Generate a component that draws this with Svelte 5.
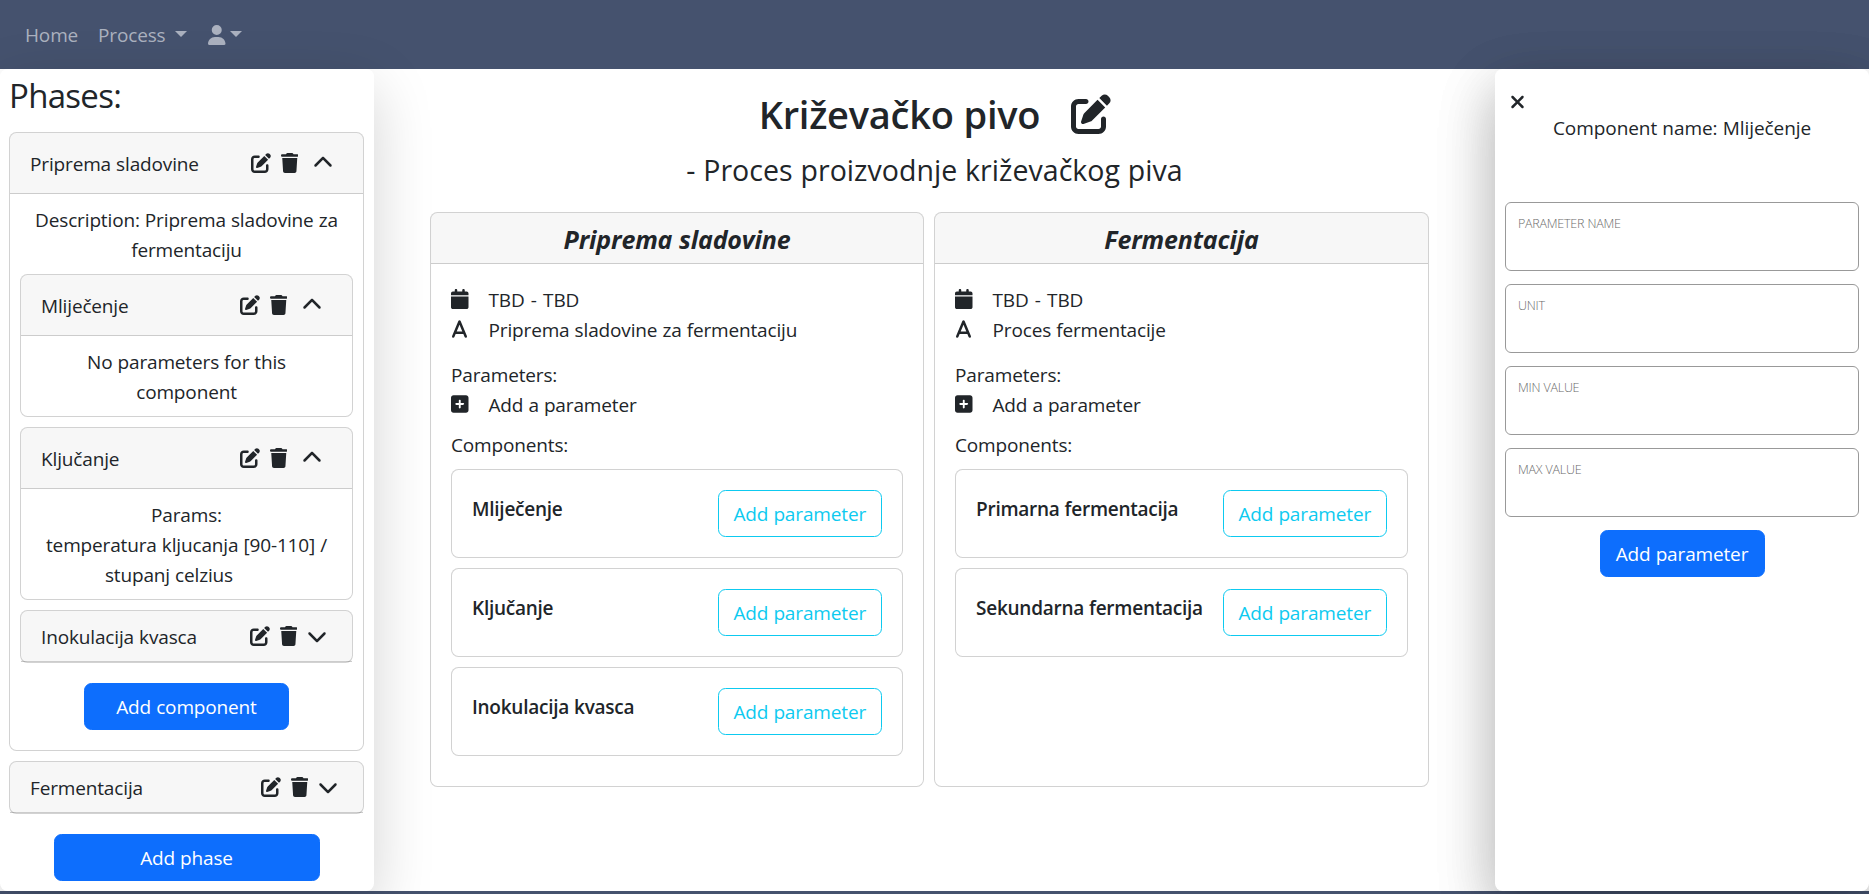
<script>
  const icons = {
    edit: [512, 'M471.6 21.7c-21.9-21.9-57.3-21.9-79.2 0L362.3 51.7l97.9 97.9 30.1-30.1c21.9-21.9 21.9-57.3 0-79.2L471.6 21.7zm-299.2 220c-6.1 6.1-10.8 13.6-13.5 21.9l-29.6 88.8c-2.9 8.6-.6 18.1 5.8 24.6s15.9 8.7 24.6 5.8l88.8-29.6c8.2-2.7 15.7-7.4 21.9-13.5L437.7 172.3 339.7 74.3 172.4 241.7zM96 64C43 64 0 107 0 160V416c0 53 43 96 96 96H352c53 0 96-43 96-96V320c0-17.7-14.3-32-32-32s-32 14.3-32 32v96c0 17.7-14.3 32-32 32H96c-17.7 0-32-14.3-32-32V160c0-17.7 14.3-32 32-32h96c17.7 0 32-14.3 32-32s-14.3-32-32-32H96z'],
    trash: [448, 'M135.2 17.7L128 32H32C14.3 32 0 46.3 0 64S14.3 96 32 96H416c17.7 0 32-14.3 32-32s-14.3-32-32-32H320l-7.2-14.3C307.4 6.8 296.3 0 284.2 0H163.8c-12.1 0-23.2 6.8-28.6 17.7zM416 128H32L53.2 467c1.6 25.3 22.6 45 47.9 45H346.9c25.3 0 46.3-19.7 47.9-45L416 128z'],
    up: [512, 'M233.4 105.4c12.5-12.5 32.8-12.5 45.3 0l192 192c12.5 12.5 12.5 32.8 0 45.3s-32.8 12.5-45.3 0L256 173.3 86.6 342.6c-12.5 12.5-32.8 12.5-45.3 0s-12.5-32.8 0-45.3l192-192z'],
    down: [512, 'M233.4 406.6c12.5 12.5 32.8 12.5 45.3 0l192-192c12.5-12.5 12.5-32.8 0-45.3s-32.8-12.5-45.3 0L256 338.7 86.6 169.4c-12.5-12.5-32.8-12.5-45.3 0s-12.5 32.8 0 45.3l192 192z'],
    user: [448, 'M224 256A128 128 0 1 0 224 0a128 128 0 1 0 0 256zm-45.7 48C79.8 304 0 383.8 0 482.3C0 498.7 13.3 512 29.7 512H418.3c16.4 0 29.7-13.3 29.7-29.7C448 383.8 368.2 304 269.7 304H178.3z'],
    calendar: [448, 'M96 32V64H48C21.5 64 0 85.5 0 112v48H448V112c0-26.5-21.5-48-48-48H352V32c0-17.7-14.3-32-32-32s-32 14.3-32 32V64H160V32c0-17.7-14.3-32-32-32S96 14.3 96 32zM448 192H0V464c0 26.5 21.5 48 48 48H400c26.5 0 48-21.5 48-48V192z'],
    a: [384, 'M221.5 51.7C216.6 39.8 204.9 32 192 32s-24.6 7.8-29.5 19.7l-120 288-40 96c-6.8 16.3 .9 35 17.2 41.8s35-.9 41.8-17.2L93.3 384H290.7l31.8 76.3c6.8 16.3 25.5 24 41.8 17.2s24-25.5 17.2-41.8l-40-96-120-288zM264 320H120l72-172.8L264 320z'],
    plus: [448, 'M64 32C28.7 32 0 60.7 0 96V416c0 35.3 28.7 64 64 64H384c35.3 0 64-28.7 64-64V96c0-35.3-28.7-64-64-64H64zM200 344V280H136c-13.3 0-24-10.7-24-24s10.7-24 24-24h64V168c0-13.3 10.7-24 24-24s24 10.7 24 24v64h64c13.3 0 24 10.7 24 24s-10.7 24-24 24H248v64c0 13.3-10.7 24-24 24s-24-10.7-24-24z'],
    close: [384, 'M342.6 150.6c12.5-12.5 12.5-32.8 0-45.3s-32.8-12.5-45.3 0L192 210.7 86.6 105.4c-12.5-12.5-32.8-12.5-45.3 0s-12.5 32.8 0 45.3L146.7 256 41.4 361.4c-12.5 12.5-12.5 32.8 0 45.3s32.8 12.5 45.3 0L192 301.3 297.4 406.6c12.5 12.5 32.8 12.5 45.3 0s12.5-32.8 0-45.3L237.3 256 342.6 150.6z']
  };

  const phases = [
    { name: 'Priprema sladovine', description: 'Priprema sladovine za fermentaciju', components: ['Mliječenje', 'Ključanje', 'Inokulacija kvasca'] },
    { name: 'Fermentacija', description: 'Proces fermentacije', components: ['Primarna fermentacija', 'Sekundarna fermentacija'] }
  ];

  const fields = ['Parameter name', 'Unit', 'Min value', 'Max value'];
</script>

{#snippet icon(name, size = 20)}
  <svg class="icon" viewBox="0 0 {icons[name][0]} 512" width={(icons[name][0] / 512) * size} height={size} aria-hidden="true">
    <path d={icons[name][1]} fill="currentColor" />
  </svg>
{/snippet}

{#snippet head(title, open)}
  <div class="head" class:open>
    <span class="head-title">{title}</span>
    {@render icon('edit')}
    {@render icon('trash')}
    <span class="toggle">{@render icon(open ? 'up' : 'down')}</span>
  </div>
{/snippet}

<div class="page">
  <nav>
    <a class="home" href="#home">Home</a>
    <a class="process" href="#process">Process<i class="caret"></i></a>
    <a class="user" href="#user" aria-label="Account">{@render icon('user')}<i class="caret"></i></a>
  </nav>

  <main>
    <aside class="left">
      <h3>Phases:</h3>
      <section class="card">
        {@render head(phases[0].name, true)}
        <div class="phase-body">
          <p class="description">Description: Priprema sladovine za<br />fermentaciju</p>
          <div class="card">
            {@render head('Mliječenje', true)}
            <p class="params">No parameters for this<br />component</p>
          </div>
          <div class="card">
            {@render head('Ključanje', true)}
            <p class="params">Params:<br />temperatura kljucanja [90-110] /<br /><span class="tail">stupanj celzius</span></p>
          </div>
          <div class="card">
            {@render head('Inokulacija kvasca', false)}
          </div>
          <button class="btn add-component">Add component</button>
        </div>
      </section>
      <section class="card">
        {@render head(phases[1].name, false)}
      </section>
      <button class="btn add-phase">Add phase</button>
    </aside>

    <div class="center">
      <h1><span>Križevačko pivo</span>{@render icon('edit', 40)}</h1>
      <p class="subtitle">- Proces proizvodnje križevačkog piva</p>
      <div class="columns">
        {#each phases as phase}
          <section class="card column">
            <h4>{phase.name}</h4>
            <div class="column-body">
              <div class="row"><span class="slot">{@render icon('calendar')}</span><span class="dates">TBD - TBD</span></div>
              <div class="row"><span class="slot">{@render icon('a')}</span>{phase.description}</div>
              <div class="row parameters">Parameters:</div>
              <div class="row"><span class="slot">{@render icon('plus')}</span>Add a parameter</div>
              <div class="row components">Components:</div>
              {#each phase.components as component}
                <div class="card component">
                  <h6>{component}</h6>
                  <button class="btn outline">Add parameter</button>
                </div>
              {/each}
            </div>
          </section>
        {/each}
      </div>
    </div>

    <aside class="right">
      <div class="close">{@render icon('close')}</div>
      <p class="component-name">Component name: Mliječenje</p>
      <div class="form">
        {#each fields as field}
          <div class="field">{field}</div>
        {/each}
      </div>
      <button class="btn submit">Add parameter</button>
    </aside>
  </main>
  <footer></footer>
</div>

<style>
  :global(body) {
    margin: 0;
    overflow: hidden;
  }

  .page {
    display: flex;
    flex-direction: column;
    height: 894px;
    overflow: hidden;
    background: #fff;
    color: #212529;
    font: 400 19px/30px 'Open Sans', 'Noto Sans', sans-serif;
    letter-spacing: -0.15px;
    word-spacing: 0.3px;
  }

  .page * {
    box-sizing: border-box;
  }

  h1, h3, h4, h6, p {
    margin: 0;
  }

  .icon {
    display: block;
    flex: none;
  }

  nav {
    display: flex;
    align-items: center;
    height: 69px;
    flex: none;
    padding: 0 25px;
    background: #45526e;
  }

  nav a {
    display: flex;
    align-items: center;
    color: #abb1bf;
    text-decoration: none;
  }

  .home {
    width: 73px;
  }

  .process {
    width: 110px;
  }

  .process .caret {
    margin-left: 10px;
  }

  .user .caret {
    margin-left: 4px;
  }

  .caret {
    border: 6px solid transparent;
    border-top-color: currentColor;
    border-bottom: 0;
    margin-top: -1px;
  }

  main {
    display: flex;
    flex: none;
    height: 822px;
  }

  aside {
    display: flex;
    flex-direction: column;
    align-items: center;
    position: relative;
    width: 374px;
    flex: none;
    border-radius: 7.5px;
    background: #fff;
    box-shadow: 0 20px 60px rgba(0, 0, 0, 0.175);
  }

  .left {
    padding: 6px 10px 10px 9px;
  }

  .left h3 {
    align-self: stretch;
    height: 57px;
    font-size: 33px;
    font-weight: 400;
    line-height: 42px;
    letter-spacing: -0.7px;
  }

  .card {
    border: 1px solid rgba(0, 0, 0, 0.175);
    border-radius: 7.5px;
    background: #fff;
  }

  .left .card {
    width: 100%;
    margin-bottom: 10px;
  }

  .head {
    display: flex;
    align-items: center;
    gap: 10px;
    height: 51px;
    padding: 0 25px 0 20px;
    border-bottom: 1px solid rgba(0, 0, 0, 0.175);
    border-radius: 6.5px 6.5px 0 0;
    background: rgba(0, 0, 0, 0.03);
  }

  .head.open {
    height: 61px;
    padding-right: 30px;
  }

  .head.open .toggle {
    margin-left: 5px;
  }

  .head-title {
    flex: 1;
    padding-top: 2px;
  }

  .phase-body {
    display: flex;
    flex-direction: column;
    align-items: center;
    padding: 11px 10px 20px;
    text-align: center;
  }

  .phase-body .head {
    text-align: left;
  }

  .description {
    margin-bottom: 9px;
  }

  .params {
    padding: 11px 0 9px;
  }

  .tail {
    margin-right: 35px;
  }

  .btn {
    height: 47px;
    padding: 0 15px;
    border: 1px solid #0d6efd;
    border-radius: 7.5px;
    background: #0d6efd;
    color: #fff;
    font: inherit;
    letter-spacing: inherit;
    word-spacing: inherit;
    white-space: nowrap;
  }

  .add-component {
    width: 205px;
    margin-top: 10px;
  }

  .add-phase {
    width: 266px;
    margin-top: 10px;
  }

  .center {
    flex: 1;
    padding: 21px 66px 0 56px;
    text-align: center;
  }

  h1 {
    display: flex;
    justify-content: center;
    align-items: center;
    gap: 31px;
    padding-left: 11px;
    font-size: 38px;
    font-weight: 600;
    line-height: 48px;
    letter-spacing: -0.25px;
  }

  .subtitle {
    height: 74px;
    padding: 14px 0 0 10px;
    font-size: 28.5px;
    line-height: 36px;
    letter-spacing: 0.05px;
  }

  .columns {
    display: grid;
    grid-template-columns: 494px 495px;
    gap: 10px;
  }

  .column h4 {
    height: 51px;
    border-bottom: 1px solid rgba(0, 0, 0, 0.175);
    border-radius: 6.5px 6.5px 0 0;
    background: rgba(0, 0, 0, 0.03);
    font-size: 25px;
    font-style: italic;
    font-weight: 700;
    line-height: 52px;
  }

  .column-body {
    padding: 21px 20px 20px;
    text-align: left;
  }

  .row {
    display: flex;
    align-items: center;
  }

  .slot {
    display: flex;
    justify-content: center;
    width: 17.5px;
    margin: -2px 20px 0 0;
  }

  .dates {
    word-spacing: 1.5px;
  }

  .parameters {
    margin-top: 15px;
  }

  .components {
    margin: 10px 0 9px;
  }

  .component {
    display: flex;
    align-items: center;
    justify-content: space-between;
    height: 89px;
    margin-bottom: 10px;
    padding: 0 20px;
  }

  .component h6 {
    margin-bottom: 9px;
    font-size: 19px;
    font-weight: 600;
    line-height: 24px;
    letter-spacing: -0.25px;
  }

  .outline {
    width: 164.5px;
    border-color: #0dcaf0;
    background: transparent;
    color: #0dcaf0;
  }

  .submit {
    width: 165px;
  }

  .right {
    padding: 23px 10px 0;
    box-shadow: 0 20px 60px rgba(0, 0, 0, 0.175), 0 20px 60px rgba(0, 0, 0, 0.175);
  }

  .close {
    align-self: flex-start;
    padding-left: 5px;
  }

  .component-name {
    height: 90px;
    padding-top: 1px;
    letter-spacing: -0.06px;
  }

  .form {
    display: flex;
    flex-direction: column;
    gap: 13px;
    width: 354px;
    margin-bottom: 13px;
  }

  .field {
    height: 69px;
    padding: 11px 12px;
    border: 1px solid #999;
    border-radius: 6px;
    color: #6c6c6c;
    font-size: 12.5px;
    font-weight: 300;
    line-height: 20px;
    letter-spacing: -0.25px;
    text-transform: uppercase;
  }

  footer {
    flex: none;
    height: 20px;
    background: #45526e;
  }
</style>
